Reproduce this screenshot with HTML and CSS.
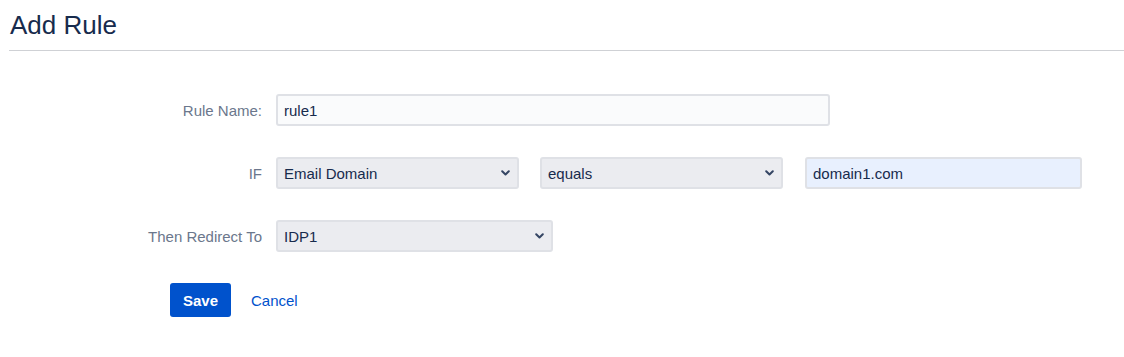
FILE: index.html
```html
<!DOCTYPE html>
<html lang="en">
<head>
<meta charset="utf-8">
<title>Add Rule</title>
<link rel="stylesheet" href="styles.css">
</head>
<body>
<div class="page">
  <header class="page-header">
    <h1 class="title">Add Rule</h1>
  </header>
  <form class="rule-form">
    <div class="field-row">
      <label class="field-label" for="rule-name">Rule Name:</label>
      <div class="controls">
        <input id="rule-name" class="text-input w-wide" type="text" value="rule1">
      </div>
    </div>
    <div class="field-row">
      <label class="field-label">IF</label>
      <div class="controls">
        <div class="select-wrap w-mid">
          <select class="select"><option>Email Domain</option></select>
          <svg class="chevron" width="9" height="6" viewBox="0 0 9 6"><path d="M1.2 1.2 L4.5 4.5 L7.8 1.2" fill="none" stroke="#344563" stroke-width="2" stroke-linecap="round" stroke-linejoin="round"/></svg>
        </div>
        <div class="select-wrap w-mid">
          <select class="select"><option>equals</option></select>
          <svg class="chevron" width="9" height="6" viewBox="0 0 9 6"><path d="M1.2 1.2 L4.5 4.5 L7.8 1.2" fill="none" stroke="#344563" stroke-width="2" stroke-linecap="round" stroke-linejoin="round"/></svg>
        </div>
        <input class="text-input autofilled w-half" type="text" value="domain1.com">
      </div>
    </div>
    <div class="field-row">
      <label class="field-label">Then Redirect To</label>
      <div class="controls">
        <div class="select-wrap w-half">
          <select class="select"><option>IDP1</option></select>
          <svg class="chevron" width="9" height="6" viewBox="0 0 9 6"><path d="M1.2 1.2 L4.5 4.5 L7.8 1.2" fill="none" stroke="#344563" stroke-width="2" stroke-linecap="round" stroke-linejoin="round"/></svg>
        </div>
      </div>
    </div>
    <div class="buttons">
      <button class="btn-primary" type="button">Save</button>
      <a class="cancel" href="#">Cancel</a>
    </div>
  </form>
</div>
</body>
</html>
```
FILE: styles.css
```css
html, body {
  margin: 0;
  padding: 0;
  background: #ffffff;
}
body {
  font-family: "Liberation Sans", Arial, sans-serif;
  font-size: 15px;
  color: #172b4d;
}
.page {
  padding-left: 9px;
}
.page-header {
  padding-top: 10px;
  padding-bottom: 10px;
  border-bottom: 1px solid #cfd1d5;
}
.title {
  margin: 0;
  padding-left: 1px;
  font-size: 26px;
  line-height: 30px;
  font-weight: 400;
  color: #172b4d;
}
.rule-form {
  padding-top: 43px;
  display: flex;
  flex-direction: column;
  gap: 31px;
}
.field-row {
  display: flex;
  align-items: center;
  gap: 14px;
  height: 32px;
}
.field-label {
  width: 253px;
  flex: none;
  text-align: right;
  color: #6b778c;
  font-size: 15px;
}
.controls {
  display: flex;
  align-items: center;
  gap: 21px;
}
.text-input,
.select {
  box-sizing: border-box;
  height: 32px;
  border: 2px solid #dfe1e6;
  border-radius: 3px;
  font-family: "Liberation Sans", Arial, sans-serif;
  font-size: 15px;
  color: #172b4d;
  padding: 0 6px;
  margin: 0;
  outline: none;
}
.text-input {
  background: #fafbfc;
}
.text-input.autofilled {
  background: #e8f0fe;
  margin-left: 1px;
}
.select {
  -webkit-appearance: none;
  appearance: none;
  width: 100%;
  background: #ebecf0;
  padding-right: 28px;
}
.select-wrap {
  position: relative;
  display: flex;
}
.chevron {
  position: absolute;
  right: 9px;
  top: 13px;
  pointer-events: none;
}
.w-wide { width: 554px; }
.w-mid { width: 243px; }
.w-half { width: 277px; }
.buttons {
  display: flex;
  align-items: center;
  gap: 20px;
  padding-left: 161px;
}
.btn-primary {
  box-sizing: border-box;
  height: 34px;
  width: 61px;
  border: none;
  border-radius: 3px;
  background: #0052cc;
  color: #ffffff;
  font-family: "Liberation Sans", Arial, sans-serif;
  font-size: 15px;
  font-weight: 700;
  padding: 0;
}
.cancel {
  color: #0052cc;
  text-decoration: none;
  font-size: 15px;
}
```
